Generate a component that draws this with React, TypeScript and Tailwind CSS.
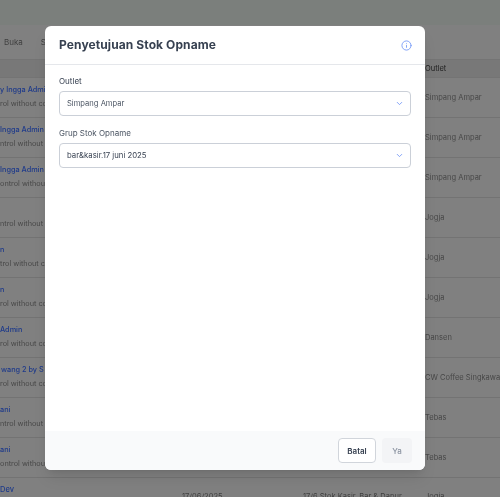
import React from 'react';
import { ChevronDown, Info } from 'lucide-react';

const rows = [
  { name: 'y Ingga Admi', nameClass: 'ml-0', sub: 'rol without con', outlet: 'Simpang Ampar' },
  { name: 'Ingga Admin', nameClass: 'ml-0', sub: 'ntrol without c', outlet: 'Simpang Ampar' },
  { name: 'Ingga Admin', nameClass: 'ml-0', sub: 'ontrol without c', outlet: 'Simpang Ampar' },
  { name: '', nameClass: 'ml-0', sub: 'ntrol without co', outlet: 'Jogja' },
  { name: 'n', nameClass: 'ml-0', sub: 'trol without co', outlet: 'Jogja' },
  { name: 'n', nameClass: 'ml-0', sub: 'rol without con', outlet: 'Jogja' },
  { name: 'Admin', nameClass: 'ml-0', sub: 'rol without con', outlet: 'Dansen' },
  { name: 'wang 2 by S', nameClass: 'ml-px', sub: 'rol without con', outlet: 'CW Coffee Singkawa' },
  { name: 'ani', nameClass: 'ml-0', sub: 'ntrol without co', outlet: 'Tebas' },
  { name: 'ani', nameClass: 'ml-0', sub: 'ontrol without c', outlet: 'Tebas' },
];

const SelectBox = ({ value, dark }: { value: string; dark?: boolean }) => (
  <div className="flex h-[25px] items-center justify-between rounded border border-[#cbd0d8] bg-white pl-[7px] pr-[6px]">
    <span className={dark ? 'text-[7.75px] text-[#374151]' : 'text-[7.6px] text-[#4b5563]'}>{value}</span>
    <ChevronDown size={9} strokeWidth={2.25} className="text-[#6f94f5]" />
  </div>
);

export default function App() {
  return (
    <div className="relative h-[497px] w-[500px] overflow-hidden bg-[#808080] font-['Inter',sans-serif] blur-[0.4px]">
      {/* page behind the dialog */}
      <div className="h-[25px] bg-[#7b7f7c]" />
      <div className="flex h-[34px] items-center gap-[18px] pl-[4px] text-[8px] text-[#3f3f3f]">
        <span>Buka</span>
        <span>S</span>
      </div>
      <div className="flex h-[19px] items-center justify-end border-y border-[#747474] bg-[#787878] text-[7.5px] text-[#1f1f1f]">
        <span className="w-[75px]">Outlet</span>
      </div>
      {rows.map((row, i) => (
        <div key={i} className="flex h-[40px] justify-between border-b border-[#737373] text-[7.3px]">
          <div className="flex flex-col gap-[3px] whitespace-nowrap pt-[7px]">
            <span className={`h-[11px] font-medium text-[#1e3a8a] ${row.nameClass}`}>{row.name}</span>
            <span className="text-[#474747]">{row.sub}</span>
          </div>
          <span className="w-[75px] self-center whitespace-nowrap text-[7.5px] text-[#474747]">{row.outlet}</span>
        </div>
      ))}
      <div className="flex text-[7.5px] text-[#3f3f3f]">
        <span className="w-[182px] pt-[6px] font-medium text-[#1e3a8a]">Dev</span>
        <span className="w-[121px] pt-[13px]">17/06/2025</span>
        <span className="w-[122px] whitespace-nowrap pt-[13px]">17/6 Stok Kasir, Bar &amp; Dapur</span>
        <span className="pt-[13px]">Jogja</span>
      </div>

      {/* dialog */}
      <div className="absolute left-[45px] top-[26px] flex h-[444px] w-[380px] flex-col overflow-hidden rounded-md bg-white shadow-lg">
        <div className="flex h-[39px] items-center justify-between border-b border-[#e5e7eb] pl-[14px] pr-[13px]">
          <h2 className="text-[12px] font-bold tracking-[0.1px] text-[#374151]">Penyetujuan Stok Opname</h2>
          <Info size={11} strokeWidth={2} className="text-[#7a9cf7]" />
        </div>
        <div className="flex flex-1 flex-col gap-[12px] px-[14px] pt-[11px]">
          <div className="flex flex-col gap-[4px]">
            <label className="text-[8px] leading-[11px] text-[#374151]">Outlet</label>
            <SelectBox value="Simpang Ampar" />
          </div>
          <div className="flex flex-col gap-[4px]">
            <label className="text-[8px] leading-[11px] text-[#4b5563]">Grup Stok Opname</label>
            <SelectBox value="bar&kasir.17 juni 2025" dark />
          </div>
        </div>
        <div className="flex h-[39px] items-center justify-end gap-[6px] bg-[#f9fafb] pr-[13px]">
          <button className="h-[25px] w-[38px] rounded border border-[#d1d5db] bg-white text-[8px] font-semibold text-[#374151]">Batal</button>
          <button className="h-[25px] w-[30px] rounded bg-[#f3f4f6] text-[8px] font-medium text-[#8b93a1]">Ya</button>
        </div>
      </div>
    </div>
  );
}
